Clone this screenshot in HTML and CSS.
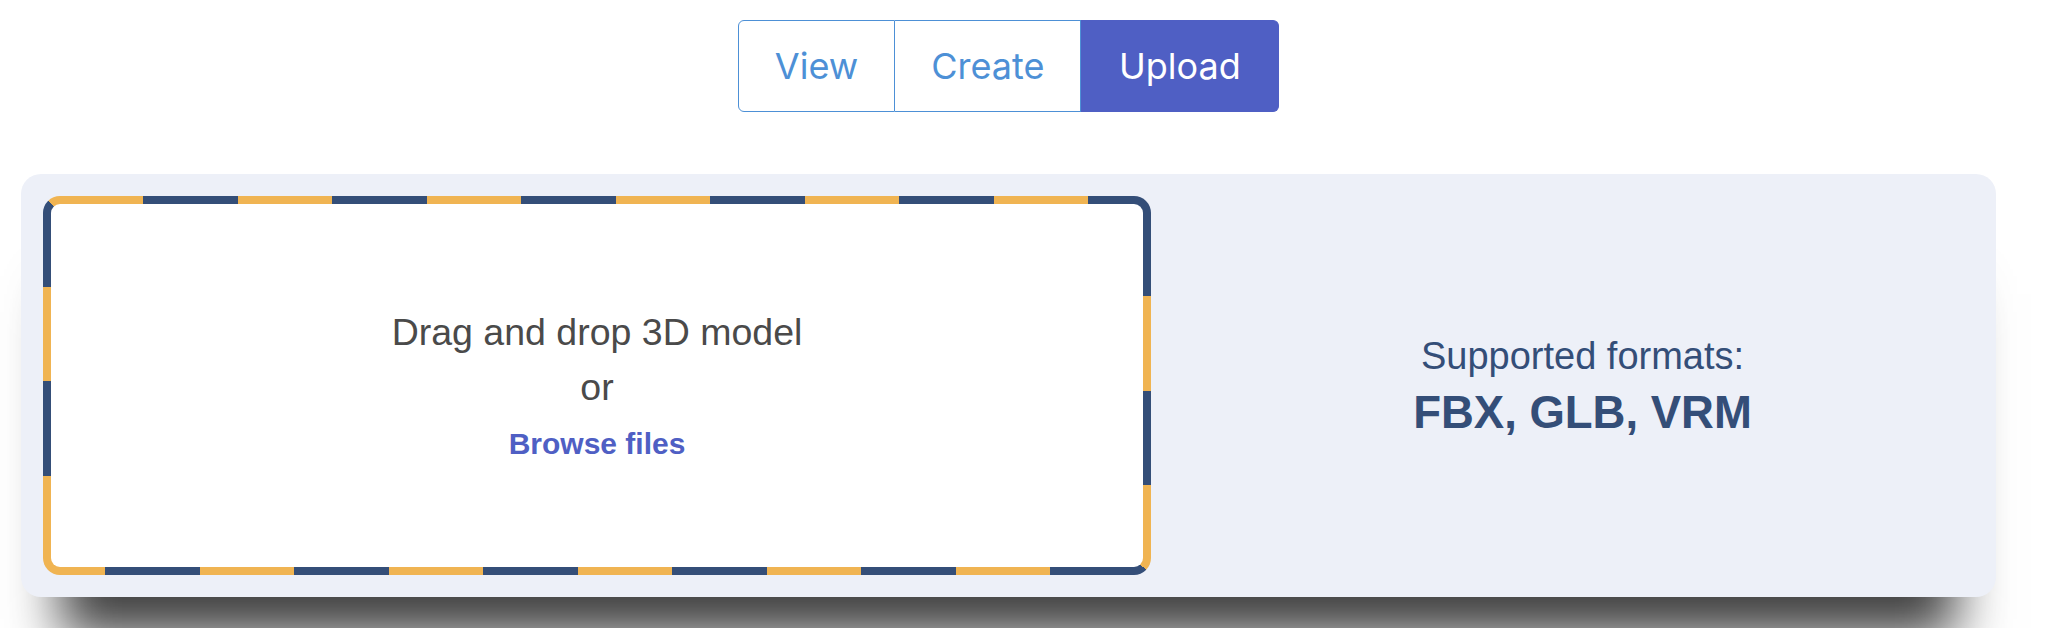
FILE: index.html
```html
<!DOCTYPE html>
<html lang="en">
<head>
    <meta charset="UTF-8">
    <meta name="viewport" content="width=device-width, initial-scale=1.0">
    <title>Upload model</title>

    <link rel="stylesheet" href="styles.css">
</head>
<body>
    <div class="page">
        <nav class="tabs">
            <button class="tab">View</button>
            <button class="tab">Create</button>
            <button class="tab active">Upload</button>
        </nav>

        <section class="upload">
            <div class="dropzone">
                <p class="drop-title">Drag and drop 3D model</p>
                <p class="drop-or">or</p>
                <a class="browse" href="#">Browse files</a>
            </div>

            <div class="formats">
                <p class="formats-label">Supported formats:</p>
                <p class="formats-list">FBX, GLB, VRM</p>
            </div>
        </section>
    </div>
</body>
</html>
```

FILE: styles.css
```css
body
{
    margin: 0;
    padding: 0;
    min-height: 100vh;
    background: #ffffff;
    font-family: 'Liberation Sans', Arial, sans-serif;
}

.page
{
    margin: 0 52px 0 21px;
    padding-top: 20px;
    padding-bottom: 40px;
}

.tabs
{
    display: flex;
    justify-content: center;
}

.tab
{
    height: 92px;
    padding: 0 36px;
    border: 1.5px solid #4d90d6;
    border-left-width: 0;
    background: #ffffff;
    color: #4d90d6;
    font-family: 'Inter', sans-serif;
    font-size: 36px;
}

.tab:first-child
{
    border-left-width: 1.5px;
    border-radius: 6px 0 0 6px;
}

.tab.active
{
    padding: 0 37.5px;
    border-color: #4f5fc4;
    border-radius: 0 6px 6px 0;
    background: #4f5fc4;
    color: #ffffff;
}

.upload
{
    margin-top: 62px;
    padding: 22px;
    display: grid;
    grid-template-columns: 1108fr 783fr;
    gap: 40px;
    background: #edf0f8;
    border-radius: 20px;
    box-shadow: 0 80px 50px -40px rgba(0, 0, 0, 0.75);
}

/* two colour dashes, one strip per side, corners split on the diagonal */
.dropzone
{
    height: 379px;
    box-sizing: border-box;
    padding-top: 5px;
    border: 8px solid transparent;
    border-radius: 17px;
    display: flex;
    flex-direction: column;
    align-items: center;
    justify-content: center;
    text-align: center;
    background:
        linear-gradient(#ffffff, #ffffff) padding-box,
        linear-gradient(to bottom left, #f0b452 50%, #344e78 50%) top left / 17px 17px no-repeat border-box,
        linear-gradient(#344e78, #344e78) top right / 17px 17px no-repeat border-box,
        linear-gradient(to bottom left, #f0b452 50%, #344e78 50%) bottom right / 17px 17px no-repeat border-box,
        linear-gradient(#f0b452, #f0b452) bottom left / 17px 17px no-repeat border-box,
        repeating-linear-gradient(90deg, #344e78 0 5.5px, #f0b452 5.5px 100px, #344e78 100px 189px) top / 100% 8px no-repeat border-box,
        repeating-linear-gradient(90deg, #f0b452 0 62px, #344e78 62px 156.5px, #f0b452 156.5px 189px) bottom / 100% 8px no-repeat border-box,
        repeating-linear-gradient(180deg, #344e78 0 90.5px, #f0b452 90.5px 185px, #344e78 185px 189px) left / 8px 100% no-repeat border-box,
        repeating-linear-gradient(180deg, #f0b452 0 5.5px, #344e78 5.5px 100px, #f0b452 100px 189px) right / 8px 100% no-repeat border-box;
}

.drop-title,
.drop-or
{
    margin: 0;
    font-size: 37.5px;
    line-height: 55px;
    color: #4a4a4a;
}

.browse
{
    margin-top: 1px;
    font-size: 30px;
    line-height: 55px;
    font-weight: bold;
    color: #4f5fc4;
    text-decoration: none;
}

.formats
{
    display: flex;
    flex-direction: column;
    align-items: center;
    justify-content: center;
    color: #344e78;
}

.formats p
{
    margin: 0;
}

.formats-label
{
    font-size: 38px;
    line-height: 50px;
}

.formats-list
{
    margin-top: 4px !important;
    font-size: 45.5px;
    line-height: 56px;
    font-weight: bold;
}
```
